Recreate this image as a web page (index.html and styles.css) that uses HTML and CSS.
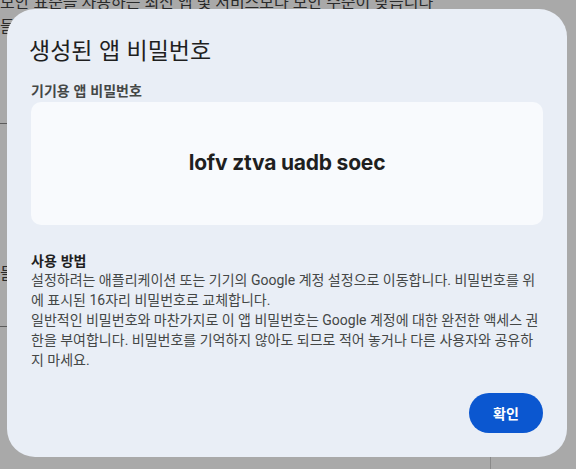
FILE: index.html
```html
<!DOCTYPE html>
<html lang="ko">
<head>
<meta charset="utf-8">
<title>생성된 앱 비밀번호</title>
<link rel="stylesheet" href="styles.css">
</head>
<body>
<div class="page">
  <p class="page-line">보안 표준을 사용하는 최신 앱 및 서비스보다 보안 수준이 낮습니다</p>
  <p class="page-line page-line2">들</p>
  <div class="page-rule rule1"></div>
  <p class="page-line page-line3">들</p>
  <div class="page-rule rule2"></div>
  <div class="page-vline"></div>
</div>
<div class="scrim">
  <div class="dialog" role="dialog" aria-labelledby="dlg-title">
    <h1 class="dialog-title" id="dlg-title">생성된 앱 비밀번호</h1>
    <div class="field-label">기기용 앱 비밀번호</div>
    <div class="password-box"><span class="password">lofv ztva uadb soec</span></div>
    <div class="howto">
      <div class="howto-title">사용 방법</div>
      <div class="howto-text">설정하려는 애플리케이션 또는 기기의 Google 계정 설정으로 이동합니다. 비밀번호를 위에 표시된 16자리 비밀번호로 교체합니다.</div>
      <div class="howto-text">일반적인 비밀번호와 마찬가지로 이 앱 비밀번호는 Google 계정에 대한 완전한 액세스 권한을 부여합니다. 비밀번호를 기억하지 않아도 되므로 적어 놓거나 다른 사용자와 공유하지 마세요.</div>
    </div>
    <div class="actions"><button class="btn-ok" type="button">확인</button></div>
  </div>
</div>
</body>
</html>
```
FILE: styles.css
```css
* { box-sizing: border-box; }
html, body { margin: 0; padding: 0; }
body {
  width: 576px;
  height: 469px;
  overflow: hidden;
  background: #a9a9a9;
  font-family: "Roboto", "Noto Sans CJK KR", sans-serif;
  position: relative;
}
.page {
  position: relative;
  height: 469px;
}
.page-line {
  margin: 0;
  font-size: 16px;
  line-height: 20px;
  color: #2a2a2a;
  white-space: nowrap;
}
.page-line:first-child { margin-top: -7px; }
.page-line2 { margin-top: 4px; }
.page-rule {
  height: 1px;
  background: #5c5c5c;
  width: 40px;
}
.rule1 { margin-top: 86px; }
.page-line3 { margin-top: 140px; }
.rule2 { margin-top: 42px; }
.page-vline {
  position: absolute;
  left: 490px;
  top: 440px;
  width: 1px;
  height: 40px;
  background: #8a8a8a;
}
.scrim {
  position: absolute;
  inset: 0;
  padding: 9px 9px 12px 7px;
}
.dialog {
  width: 560px;
  height: 448px;
  background: #e9eef6;
  border-radius: 28px;
  padding: 24px 24px 24px 24px;
  display: flex;
  flex-direction: column;
}
.dialog-title {
  margin: 0 0 0 -2px;
  font-weight: 400;
  font-size: 23px;
  line-height: 32px;
  color: #1f1f1f;
  font-family: "Noto Sans CJK KR", sans-serif;
}
.field-label {
  margin-top: 15px;
  font-size: 14px;
  line-height: 20px;
  font-weight: 700;
  color: #444746;
  font-family: "Noto Sans CJK KR", sans-serif;
}
.password-box {
  margin-top: 2px;
  height: 123px;
  background: #f8fafd;
  border-radius: 10px;
  display: flex;
  align-items: center;
  justify-content: center;
}
.password {
  font-family: "Inter", sans-serif;
  font-weight: 700;
  font-size: 21px;
  color: #1f1f1f;
  letter-spacing: -0.2px;
  margin-top: -2px;
}
.howto {
  margin-top: 25px;
  font-size: 14px;
  line-height: 20px;
  color: #444746;
}
.howto-title {
  font-weight: 700;
  color: #1f1f1f;
  font-family: "Noto Sans CJK KR", sans-serif;
}
.actions {
  margin-top: auto;
  display: flex;
  justify-content: flex-end;
}
.btn-ok {
  width: 74px;
  height: 40px;
  border: none;
  border-radius: 20px;
  background: #0b57d0;
  color: #ffffff;
  font-family: "Noto Sans CJK KR", sans-serif;
  font-weight: 700;
  font-size: 14px;
  padding: 0;
}
```
